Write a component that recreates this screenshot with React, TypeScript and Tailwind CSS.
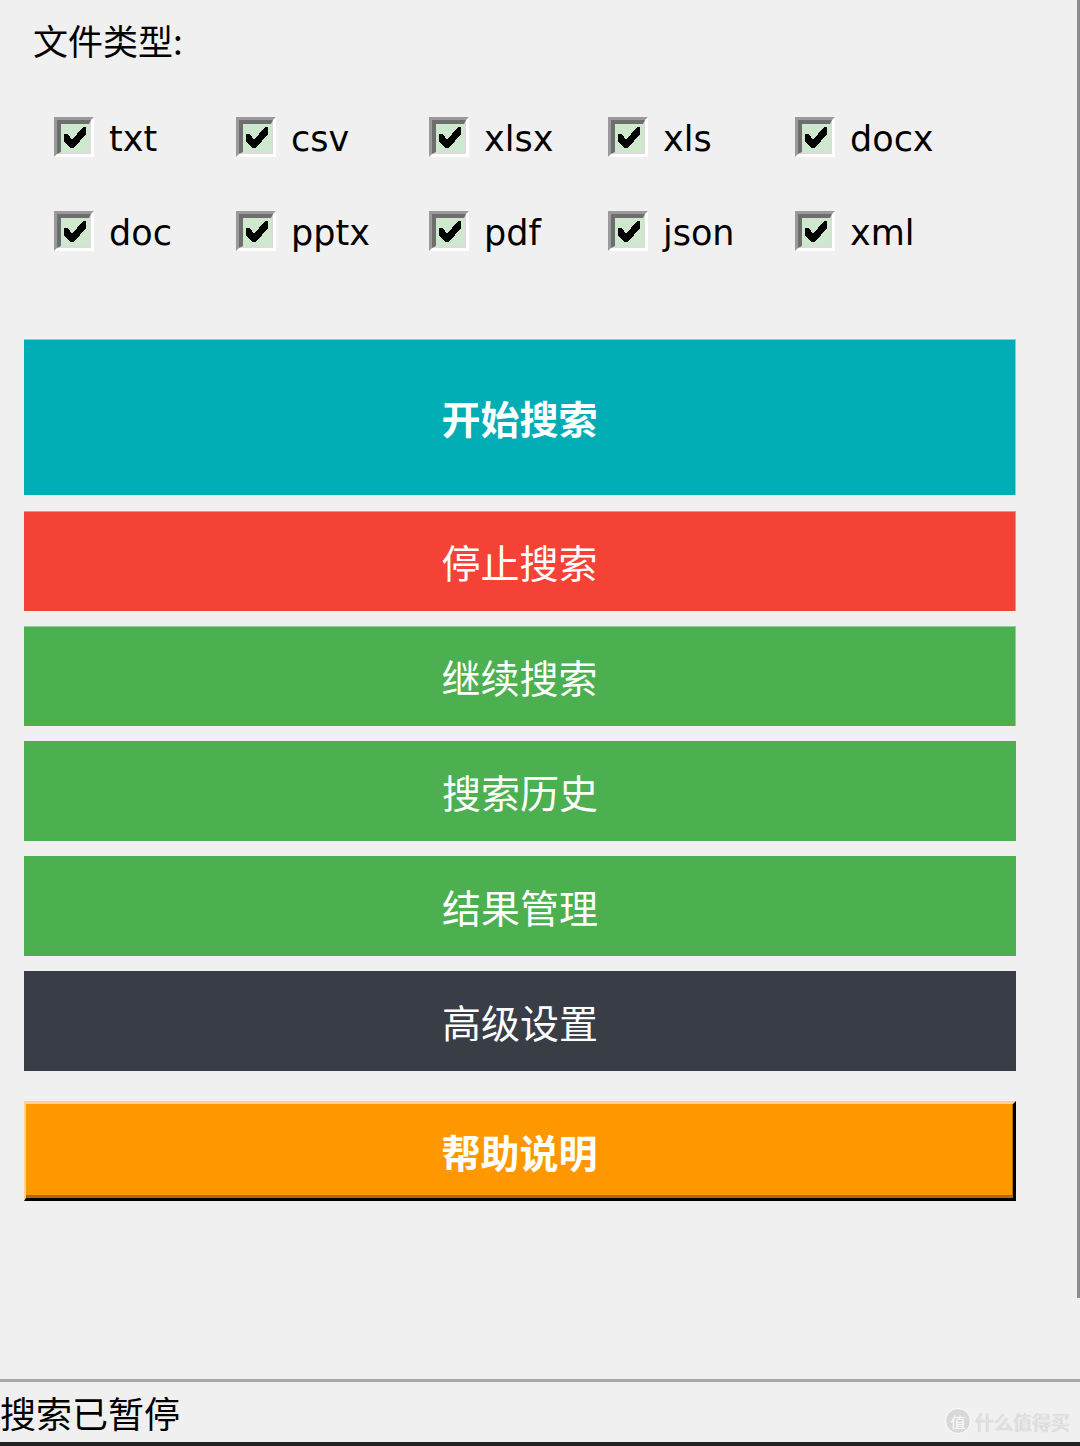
import React from "react";

const cjk = { fontFamily: '"Noto Sans CJK SC", "Noto Sans", sans-serif' };
const latin = { fontFamily: '"DejaVu Sans", "Noto Sans CJK SC", sans-serif' };

function Check() {
  return (
    <div className="w-[40px] h-[40px] border-t-[3px] border-l-[3px] border-b-[3px] border-r-[3px] border-t-[#9a9a9a] border-l-[#9a9a9a] border-b-white border-r-white flex-none">
      <div className="w-full h-full border-t-[4px] border-l-[4px] border-b-[2px] border-r-[2px] border-t-[#6e6e6e] border-l-[#6e6e6e] border-b-[#dcdcdc] border-r-[#dcdcdc] bg-[#cde8cd] flex items-center justify-center">
        <svg width="26" height="24" viewBox="0 0 26 24" shapeRendering="crispEdges">
          <path d="M2 8 L2 15 L8 22 L12 22 L24 8 L24 1 L21 1 L10 14 L6 8 Z" fill="#000" />
        </svg>
      </div>
    </div>
  );
}

const row1 = ["txt", "csv", "xlsx", "xls", "docx"];
const row2 = ["doc", "pptx", "pdf", "json", "xml"];
const colW = ["w-[182px]", "w-[193px]", "w-[179px]", "w-[187px]", "w-[200px]"];

function Row({ items }: { items: string[] }) {
  return (
    <div className="flex h-[40px]">
      {items.map((t, i) => (
        <div key={t} className={`${colW[i]} flex items-center gap-[15px]`}>
          <Check />
          <span className="text-[35px] leading-[36px] text-black pt-[4px]" style={latin}>
            {t}
          </span>
        </div>
      ))}
    </div>
  );
}

function Btn({
  label,
  cls,
  bold,
}: {
  label: string;
  cls: string;
  bold?: boolean;
}) {
  return (
    <div
      className={`w-[992px] flex items-center justify-center text-white text-[39px] leading-none ${bold ? "font-bold" : ""} ${cls}`}
      style={cjk}
    >
      {label}
    </div>
  );
}

export default function App() {
  return (
    <div className="w-[1080px] h-[1446px] bg-[#f0f0f0] flex flex-col overflow-hidden">
      <div className="h-[1298px] border-r-[3px] border-[#8a8c92] flex flex-col">
        <div className="pl-[33px] pt-[22px] text-[35px] leading-[35px] text-black" style={cjk}>
          文件类型:
        </div>
        <div className="pl-[54px] mt-[60px] flex flex-col gap-[54px]">
          <Row items={row1} />
          <Row items={row2} />
        </div>
        <div className="pl-[24px] mt-[88px] flex flex-col">
          <Btn label="开始搜索" bold cls="h-[156px] bg-[#00adb5] border-t border-r border-[#7fd3d7]" />
          <div className="h-[16px]" />
          <Btn label="停止搜索" cls="h-[100px] bg-[#f44336] border-t border-r border-[#f88a80]" />
          <div className="h-[15px]" />
          <Btn label="继续搜索" cls="h-[100px] bg-[#4caf50] border-t border-r border-[#8fd092]" />
          <div className="h-[15px]" />
          <Btn label="搜索历史" cls="h-[100px] bg-[#4caf50]" />
          <div className="h-[15px]" />
          <Btn label="结果管理" cls="h-[100px] bg-[#4caf50]" />
          <div className="h-[15px]" />
          <Btn label="高级设置" cls="h-[100px] bg-[#393d46]" />
          <div className="h-[30px]" />
          <Btn
            label="帮助说明"
            bold
            cls="h-[100px] bg-[#ff9800] border-t-[3px] border-l-[2px] border-b-[3px] border-r-[3px] border-t-[#fcd38a] border-l-[#fcd38a] border-b-black border-r-black shadow-[inset_-1px_-3px_0_#b06a00]"
          />
        </div>
      </div>
      <div className="flex-1" />
      <div className="relative h-[63px] border-t-[3px] border-[#a8a8a8] flex items-center">
        <span className="text-[36px] leading-none text-black" style={cjk}>
          搜索已暂停
        </span>
        <div className="absolute right-[10px] top-[26px] flex items-center gap-[4px]">
          <div className="w-[26px] h-[26px] rounded-full bg-[#d8d8d8] border border-white flex items-center justify-center text-[15px] text-white leading-none" style={cjk}>
            值
          </div>
          <span className="text-[19px] leading-none text-[#e4e4e4] [text-shadow:0_0_1px_#b0b0b0]" style={cjk}>
            什么值得买
          </span>
        </div>
      </div>
      <div className="h-[4px] bg-[#222]" />
    </div>
  );
}
